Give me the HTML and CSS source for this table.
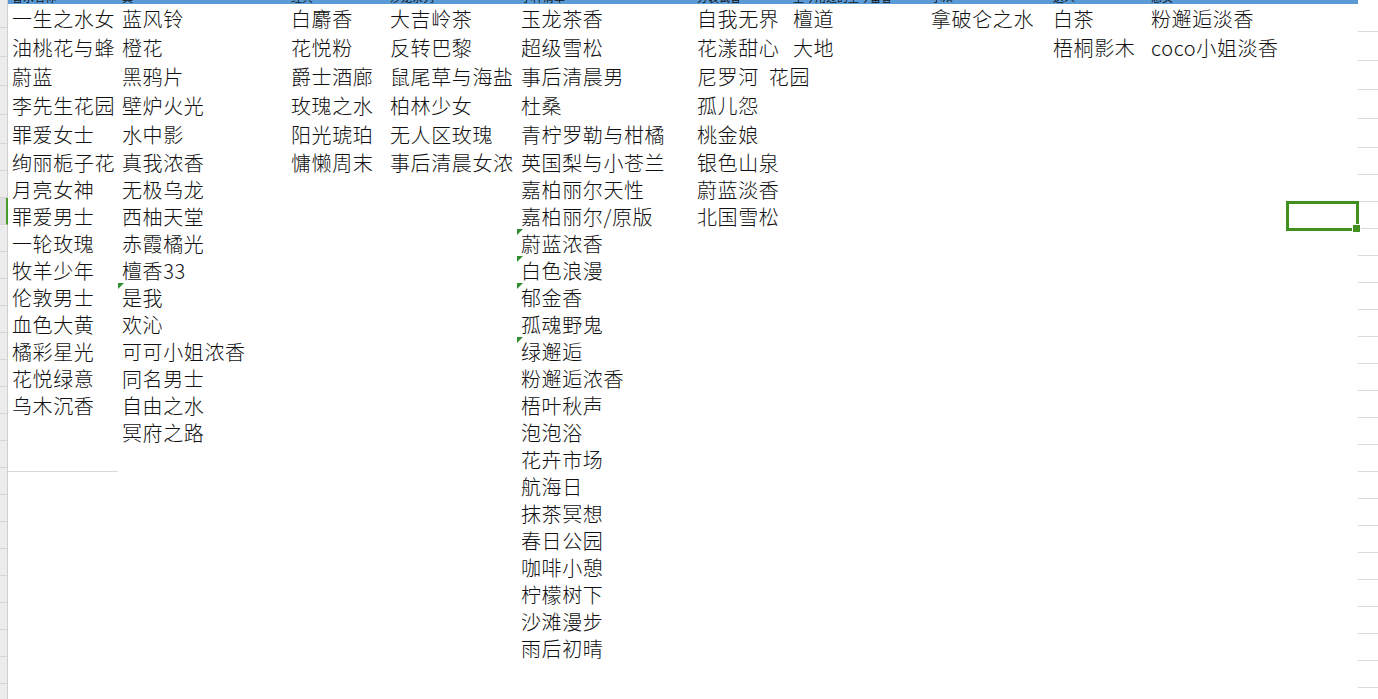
FILE: index.html
```html
<!DOCTYPE html>
<html lang="zh-CN">
<head>
    <meta charset="UTF-8">
    <meta name="viewport" content="width=device-width, initial-scale=1.0">
    <title>香水清单</title>
    <link rel="stylesheet" href="styles.css">
</head>
<body>

    <div class="sheet">
        <!-- row headers, only a sliver is visible -->
        <div class="rowhead">
            <div class="rh-top"></div>
            <div class="rh"></div><div class="rh"></div><div class="rh"></div><div class="rh"></div><div class="rh"></div>
            <div class="rh"></div><div class="rh"></div><div class="rh on"></div><div class="rh"></div><div class="rh"></div>
            <div class="rh"></div><div class="rh"></div><div class="rh"></div><div class="rh"></div><div class="rh"></div>
            <div class="rh"></div><div class="rh"></div><div class="rh"></div><div class="rh"></div><div class="rh"></div>
            <div class="rh"></div><div class="rh"></div><div class="rh"></div><div class="rh"></div><div class="rh"></div>
            <div class="rh"></div>
        </div>

        <div class="col col-a">
            <div class="head"><span>香水名称</span></div>
            <div class="cell">一生之水女</div>
            <div class="cell">油桃花与蜂</div>
            <div class="cell">蔚蓝</div>
            <div class="cell">李先生花园</div>
            <div class="cell">罪爱女士</div>
            <div class="cell">绚丽栀子花</div>
            <div class="cell">月亮女神</div>
            <div class="cell">罪爱男士</div>
            <div class="cell">一轮玫瑰</div>
            <div class="cell">牧羊少年</div>
            <div class="cell">伦敦男士</div>
            <div class="cell">血色大黄</div>
            <div class="cell">橘彩星光</div>
            <div class="cell">花悦绿意</div>
            <div class="cell">乌木沉香</div>
            <div class="cell"></div>
            <div class="cell line"></div>
        </div>

        <div class="col col-b">
            <div class="head"><span>其</span></div>
            <div class="cell">蓝风铃</div>
            <div class="cell">橙花</div>
            <div class="cell">黑鸦片</div>
            <div class="cell">壁炉火光</div>
            <div class="cell">水中影</div>
            <div class="cell">真我浓香</div>
            <div class="cell">无极乌龙</div>
            <div class="cell">西柚天堂</div>
            <div class="cell">赤霞橘光</div>
            <div class="cell">檀香33</div>
            <div class="cell flag">是我</div>
            <div class="cell">欢沁</div>
            <div class="cell">可可小姐浓香</div>
            <div class="cell">同名男士</div>
            <div class="cell">自由之水</div>
            <div class="cell">冥府之路</div>
        </div>

        <div class="col col-c">
            <div class="head"><span>经典</span></div>
            <div class="cell">白麝香</div>
            <div class="cell">花悦粉</div>
            <div class="cell">爵士酒廊</div>
            <div class="cell">玫瑰之水</div>
            <div class="cell">阳光琥珀</div>
            <div class="cell">慵懒周末</div>
        </div>

        <div class="col col-d">
            <div class="head"><span>沙龙系列</span></div>
            <div class="cell">大吉岭茶</div>
            <div class="cell">反转巴黎</div>
            <div class="cell">鼠尾草与海盐</div>
            <div class="cell">柏林少女</div>
            <div class="cell">无人区玫瑰</div>
            <div class="cell">事后清晨女浓</div>
        </div>

        <div class="col col-e">
            <div class="head"><span>小样清单</span></div>
            <div class="cell">玉龙茶香</div>
            <div class="cell">超级雪松</div>
            <div class="cell">事后清晨男</div>
            <div class="cell">杜桑</div>
            <div class="cell">青柠罗勒与柑橘</div>
            <div class="cell">英国梨与小苍兰</div>
            <div class="cell">嘉柏丽尔天性</div>
            <div class="cell">嘉柏丽尔/原版</div>
            <div class="cell flag">蔚蓝浓香</div>
            <div class="cell flag">白色浪漫</div>
            <div class="cell flag">郁金香</div>
            <div class="cell">孤魂野鬼</div>
            <div class="cell flag">绿邂逅</div>
            <div class="cell">粉邂逅浓香</div>
            <div class="cell">梧叶秋声</div>
            <div class="cell">泡泡浴</div>
            <div class="cell">花卉市场</div>
            <div class="cell">航海日</div>
            <div class="cell">抹茶冥想</div>
            <div class="cell">春日公园</div>
            <div class="cell">咖啡小憩</div>
            <div class="cell">柠檬树下</div>
            <div class="cell">沙滩漫步</div>
            <div class="cell">雨后初晴</div>
        </div>

        <div class="col col-f">
            <div class="head"><span>分装试香</span></div>
            <div class="cell">自我无界</div>
            <div class="cell">花漾甜心</div>
            <div class="cell">尼罗河&nbsp;&nbsp;花园</div>
            <div class="cell">孤儿怨</div>
            <div class="cell">桃金娘</div>
            <div class="cell">银色山泉</div>
            <div class="cell">蔚蓝淡香</div>
            <div class="cell">北国雪松</div>
        </div>

        <div class="col col-g">
            <div class="head"><span>至今用过的至今留香</span></div>
            <div class="cell">檀道</div>
            <div class="cell">大地</div>
        </div>

        <div class="col col-h">
            <div class="head"><span>小众</span></div>
            <div class="cell">拿破仑之水</div>
        </div>

        <div class="col col-i">
            <div class="head"><span>送人</span></div>
            <div class="cell">白茶</div>
            <div class="cell">梧桐影木</div>
        </div>

        <div class="col col-j">
            <div class="head"><span>想买</span></div>
            <div class="cell">粉邂逅淡香</div>
            <div class="cell">coco小姐淡香</div>
        </div>

        <div class="col col-k">
            <div class="head"></div>
            <div class="cell"></div><div class="cell"></div><div class="cell"></div><div class="cell"></div>
            <div class="cell"></div><div class="cell"></div><div class="cell"></div>
            <div class="cell sel"></div>
        </div>

        <!-- empty columns keep the plain grid lines -->
        <div class="col col-rest">
            <div class="head"></div>
            <div class="cell"></div><div class="cell"></div><div class="cell"></div><div class="cell"></div><div class="cell"></div>
            <div class="cell"></div><div class="cell"></div><div class="cell"></div><div class="cell"></div><div class="cell"></div>
            <div class="cell"></div><div class="cell"></div><div class="cell"></div><div class="cell"></div><div class="cell"></div>
            <div class="cell"></div><div class="cell"></div><div class="cell"></div><div class="cell"></div><div class="cell"></div>
            <div class="cell"></div><div class="cell"></div><div class="cell"></div><div class="cell"></div><div class="cell"></div>
            <div class="cell"></div>
        </div>
    </div>

</body>
</html>
```

FILE: styles.css
```css
* {
    box-sizing: border-box;
}
body {
    margin: 0;
    background-color: #fff;
    font-family: "Noto Sans CJK SC", sans-serif;
    color: #111;
    overflow: hidden;
}
.sheet {
    display: flex;
    height: 699px;
    overflow: hidden;
}

/* row header strip */
.rowhead {
    width: 8px;
    flex: none;
    display: flex;
    flex-direction: column;
}
.rh-top {
    height: 4px;
    background-color: #ececec;
    border-right: 1px solid #cfcfcf;
}
.rh {
    height: 27px;
    background-color: #ececec;
    border-right: 1px solid #cfcfcf;
    border-bottom: 1px solid #d6d6d6;
    flex: none;
}
.rh:nth-child(2) {
    height: 28px;
}
.rh:nth-child(n+3):nth-child(-n+6) {
    height: 29px;
}
.rh.on {
    background-color: #dedede;
    border-right: 2px solid #4a9a2a;
}

/* columns */
.col {
    flex: none;
    display: flex;
    flex-direction: column;
}
.col-a { width: 110px; }
.col-b { width: 169px; }
.col-c { width: 99px; }
.col-d { width: 131px; }
.col-e { width: 176px; }
.col-f { width: 96px; }
.col-g { width: 138px; }
.col-h { width: 122px; }
.col-i { width: 98px; }
.col-j { width: 139px; }
.col-k { width: 72px; }
.col-rest { flex: 1; }

.head {
    height: 4px;
    flex: none;
    background-color: #5b9bd5;
    position: relative;
    z-index: 1;
}
.head span {
    display: block;
    height: 4px;
    overflow: hidden;
    white-space: nowrap;
    padding-left: 4px;
    font-size: 11px;
    line-height: 12px;
}
.head span::before {
    content: "";
    display: block;
    margin-top: -9px;
}
.col-rest .head {
    background-color: #fff;
}

.cell {
    height: 27px;
    line-height: 27px;
    flex: none;
    position: relative;
    padding: 1px 0 0 4px;
    font-size: 20px;
    font-weight: 300;
    letter-spacing: 0.6px;
    white-space: nowrap;
}
.cell:nth-child(2) {
    height: 28px;
    line-height: 28px;
}
.cell:nth-child(n+3):nth-child(-n+6) {
    height: 29px;
    line-height: 29px;
}
.cell.line {
    border-bottom: 1px solid #d9d9d9;
}
.col-rest .cell {
    border-bottom: 1px solid #dadada;
}

/* little green marker in the corner */
.flag::before {
    content: "";
    position: absolute;
    left: 0;
    top: 0;
    border-top: 6px solid #2f8f2f;
    border-right: 6px solid transparent;
}

/* active cell */
.sel::after {
    content: "";
    position: absolute;
    top: -1px;
    left: 0;
    right: -1px;
    bottom: -2px;
    border: 3px solid #41901f;
    z-index: 2;
}
.sel::before {
    content: "";
    position: absolute;
    right: -3px;
    bottom: -4px;
    width: 7px;
    height: 7px;
    background-color: #41901f;
    border: 1px solid #fff;
    z-index: 3;
}
```
